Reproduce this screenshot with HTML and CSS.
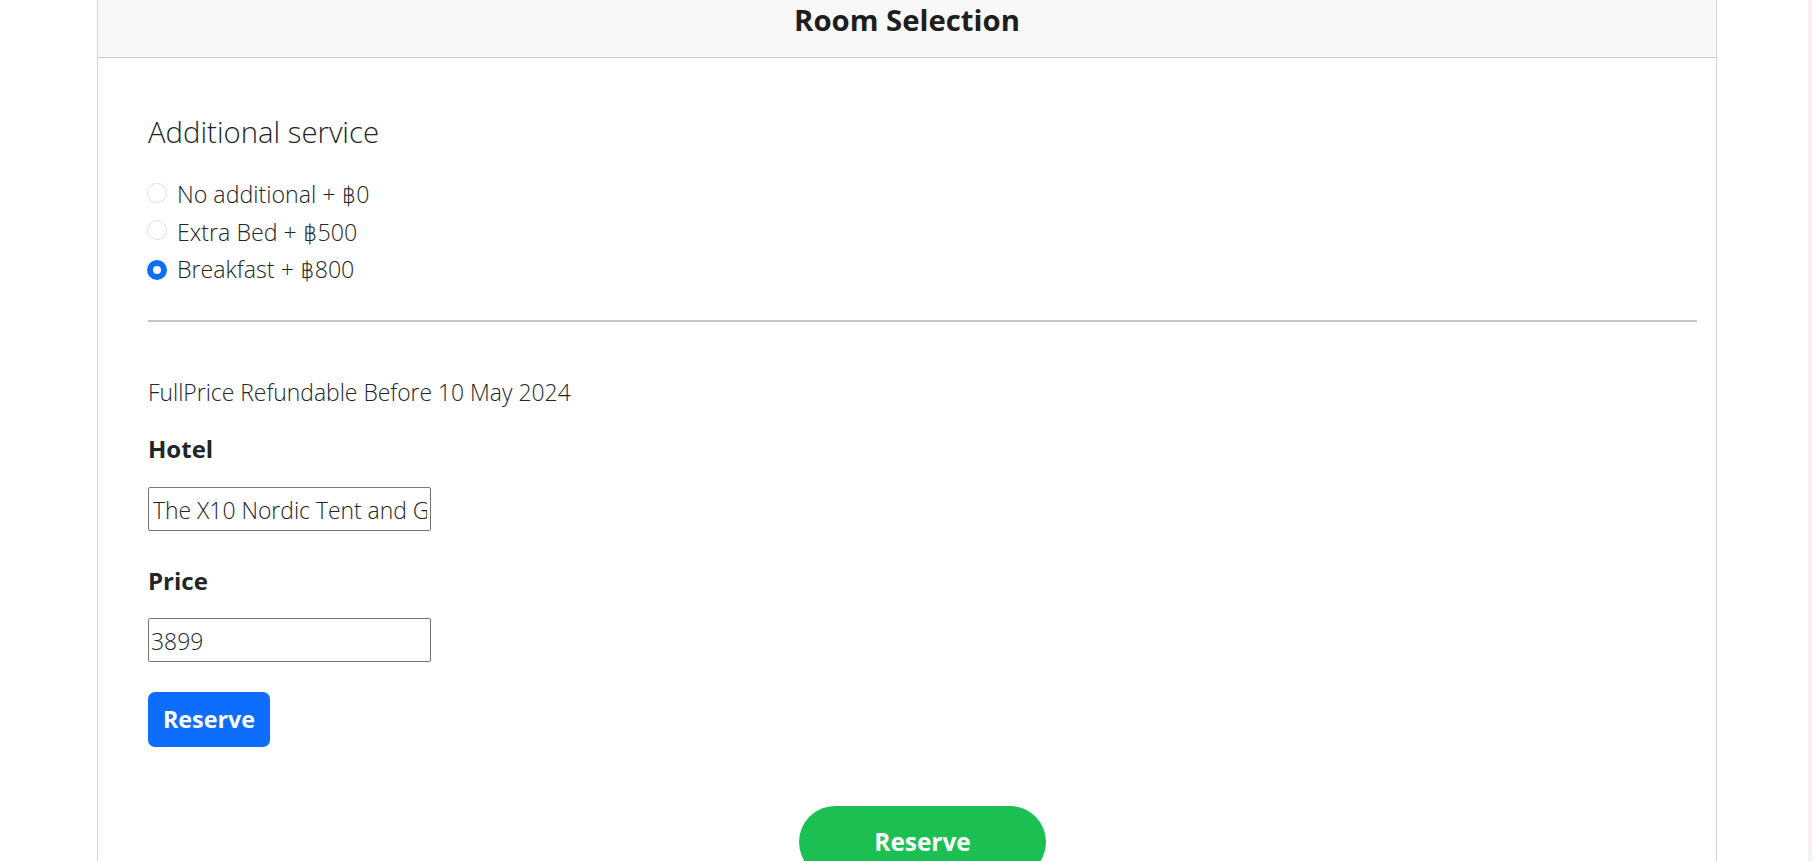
FILE: index.html
```html
<!DOCTYPE html>
<html lang="en">
<head>
<meta charset="utf-8">
<title>Room Selection</title>
<link rel="stylesheet" href="styles.css">
</head>
<body>
<div class="card">
  <div class="card-header">Room Selection</div>
  <div class="card-body">
    <h3 class="section-title">Additional service</h3>
    <div class="radio-list">
      <label class="radio-row"><input type="radio" name="svc" class="radio"><span>No additional + ฿0</span></label>
      <label class="radio-row"><input type="radio" name="svc" class="radio"><span>Extra Bed + ฿500</span></label>
      <label class="radio-row"><input type="radio" name="svc" class="radio" checked><span>Breakfast + ฿800</span></label>
    </div>
    <hr class="divider">
    <p class="refund">FullPrice Refundable Before 10 May 2024</p>
    <label class="field-label field-label-first">Hotel</label>
    <input class="field-input field-input-first" type="text" value="The X10 Nordic Tent and Glamping Khao Yai">
    <label class="field-label field-label-second">Price</label>
    <input class="field-input field-input-second" type="text" value="3899">
    <div class="btn-row">
      <button class="btn-primary" type="button">Reserve</button>
    </div>
    <div class="center-row">
      <button class="btn-green" type="button">Reserve</button>
    </div>
  </div>
</div>
</body>
</html>
```
FILE: styles.css
```css
* { box-sizing: border-box; }
html, body { margin: 0; padding: 0; }
body {
  width: 1815px;
  height: 861px;
  overflow: hidden;
  font-family: "Open Sans", "DejaVu Sans", sans-serif;
  color: #212529;
  background: linear-gradient(to right, #ffffff 0, #ffffff 1808px, #f8eef2 1808px, #f8eef2 1811px, #f0f8ec 1811px, #f0f8ec 1812px, #ffffff 1812px);
}
.card {
  margin-left: 97px;
  width: 1620px;
  min-height: 900px;
  border: 1px solid #d6d6d6;
  border-top: none;
  background: #fff;
}
.card-header {
  background: #f8f8f8;
  border-bottom: 1px solid #cbcbcb;
  text-align: center;
  font-weight: 700;
  font-size: 29.3px;
  line-height: 40px;
  padding-bottom: 17px;
  color: #1e1e1e;
}
.card-body {
  padding: 56px 19px 0 50px;
}
.section-title {
  margin: 0;
  font-weight: 300;
  font-size: 29.3px;
  line-height: 36px;
}
.radio-list {
  margin-top: 26px;
  display: flex;
  flex-direction: column;
}
.radio-row {
  display: flex;
  align-items: center;
  height: 37.5px;
  font-size: 23.2px;
  font-weight: 300;
  line-height: 37.5px;
}
.radio {
  appearance: none;
  -webkit-appearance: none;
  width: 20px;
  height: 20px;
  margin: 0 10px 0 -1px;
  border-radius: 50%;
  border: 1px solid #dedede;
  background: #fff;
  flex: none;
  position: relative;
  top: -2px;
}
.radio:checked {
  border: 6px solid #0d6efd;
  top: 0;
}
.divider {
  margin: 31px 0 0;
  border: none;
  height: 2px;
  background: #c6c6c6;
}
.refund {
  margin: 53px 0 0;
  font-size: 22.9px;
  font-weight: 300;
  line-height: 36px;
}
.field-label {
  display: block;
  font-weight: 700;
  font-size: 24px;
  line-height: 36px;
}
.field-label-first { margin-top: 20px; }
.field-label-second { margin-top: 32px; }
.field-input {
  display: block;
  width: 283px;
  height: 44px;
  border: 1px solid #767676;
  border-radius: 2px;
  padding: 3px 3px 0 4px;
  font-family: "Open Sans", "DejaVu Sans", sans-serif;
  font-size: 22.9px;
  font-weight: 300;
  color: #212529;
  background: #fff;
  outline: none;
}
.field-input-first { margin-top: 20px; }
.field-input-second { margin-top: 19px; padding-left: 2px; }
.btn-row {
  margin-top: 30px;
  display: flex;
}
.btn-primary {
  width: 122px;
  height: 55px;
  border: none;
  border-radius: 7px;
  background: #0d6efd;
  color: #fff;
  font-family: "Open Sans", sans-serif;
  font-weight: 700;
  font-size: 23.3px;
  line-height: 55px;
  padding: 0;
}
.center-row {
  margin-top: 59px;
  display: flex;
  justify-content: center;
}
.btn-green {
  width: 247px;
  height: 72px;
  border: none;
  border-radius: 36px;
  background: #1cc052;
  color: #fff;
  font-family: "Open Sans", sans-serif;
  font-weight: 700;
  font-size: 24.4px;
  line-height: 72px;
  padding: 0;
}
```
